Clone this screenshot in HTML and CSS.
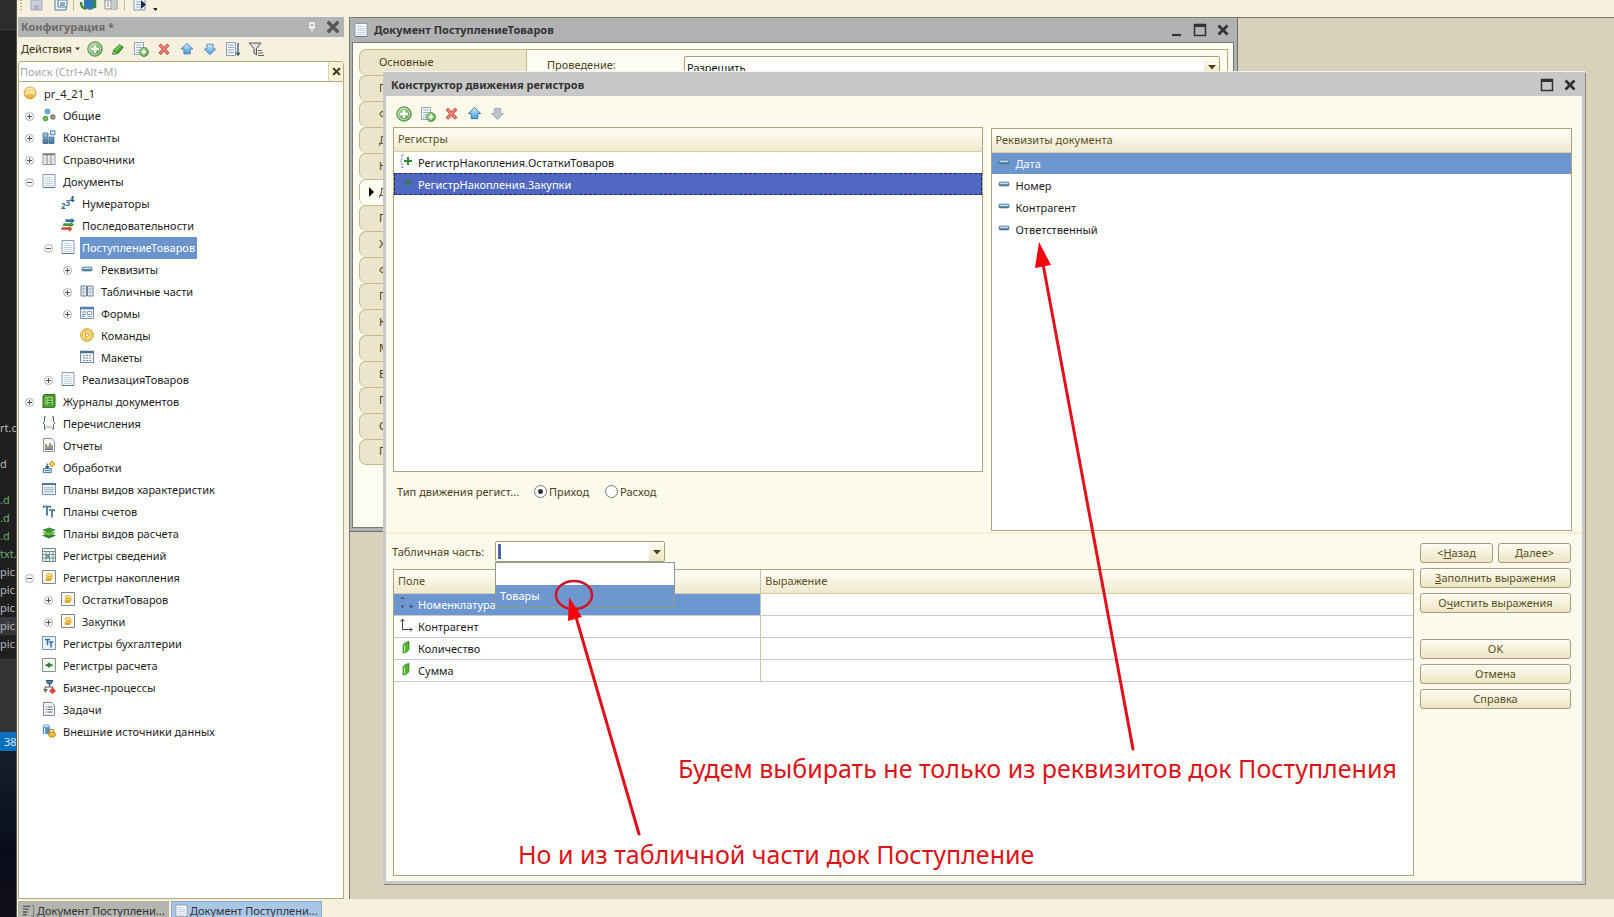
FILE: index.html
```
<!DOCTYPE html>
<html lang="ru">
<head>
<meta charset="utf-8">
<title>Конфигуратор</title>
<link rel="stylesheet" href="styles.css">
</head>
<body>
<svg class="defs" aria-hidden="true">
  <defs>
    <linearGradient id="gGreen" x1="0" y1="0" x2="1" y2="1"><stop offset="0" stop-color="#b5dfa0"/><stop offset="1" stop-color="#4d9440"/></linearGradient>
    <linearGradient id="gBlue" x1="0" y1="0" x2="0" y2="1"><stop offset="0" stop-color="#d6f0ff"/><stop offset="1" stop-color="#3f9fdc"/></linearGradient>
    <linearGradient id="gSteel" x1="0" y1="0" x2="0" y2="1"><stop offset="0" stop-color="#a9cbe0"/><stop offset="1" stop-color="#3d6d92"/></linearGradient>
    <linearGradient id="gGold" x1="0" y1="0" x2="0" y2="1"><stop offset="0" stop-color="#fff3b0"/><stop offset="1" stop-color="#dfa52a"/></linearGradient>
  </defs>
  <symbol id="add" viewBox="0 0 16 16"><circle cx="8" cy="8" r="7.2" fill="url(#gGreen)" stroke="#4f8a48"/><circle cx="8" cy="8" r="5.8" fill="none" stroke="#d2ecc6" stroke-width=".8"/><path d="M8 4v8M4 8h8" stroke="#fff" stroke-width="2.4"/></symbol>
  <symbol id="pencil" viewBox="0 0 16 16"><path d="M2 14l1-5 7-6 4 3-6 7z" fill="#4fae35" stroke="#27701b"/><path d="M2 14l1-4 3 3z" fill="#e9d9a0" stroke="#494"/><path d="M5 9l6-5" stroke="#b5e79a"/></symbol>
  <symbol id="copy" viewBox="0 0 16 16"><path d="M1.5 1.500h9v12h-9z" fill="#f6f9fc" stroke="#8fa3b5"/><path d="M3 4h6M3 6.500h6M3 9h4M3 11.500h3" stroke="#9db5ca"/><circle cx="11" cy="11" r="4.500" fill="url(#gGreen)" stroke="#4f8a48" stroke-width=".8"/><path d="M11 8.500v5M8.500 11h5" stroke="#fff" stroke-width="1.600"/></symbol>
  <symbol id="del" viewBox="0 0 16 16"><path d="M3 3l10 10.500M13 3L3 13.500" stroke="#c9463c" stroke-width="3.600"/><path d="M3.500 3.500l9 9.500M12.500 3.500l-9 9.500" stroke="#f18d80" stroke-width="1.600"/></symbol>
  <symbol id="up" viewBox="0 0 16 16"><path d="M8 1.500L14.500 8H11.500v5.500h-7V8H1.500z" fill="url(#gBlue)" stroke="#3b6fa8"/></symbol>
  <symbol id="down" viewBox="0 0 16 16"><path d="M8 14.500L14.500 8H11.500V2.500h-7V8H1.500z" fill="url(#gBlue)" stroke="#4a80b8"/></symbol>
  <symbol id="downOff" viewBox="0 0 16 16"><path d="M8 14.500L14.500 8H11.500V2.500h-7V8H1.500z" fill="#bcc2ce" stroke="#a2a8b4"/></symbol>
  <symbol id="sort" viewBox="0 0 16 16"><path d="M1.500 1.500h9v13h-9z" fill="#f4f7fb" stroke="#8d9db0"/><path d="M3 4h6M3 6.500h6M3 9h6M3 11.500h6" stroke="#90a8c4"/><path d="M13 2v12M11 11.500l2 2.500 2-2.500" fill="none" stroke="#2c4668" stroke-width="1.200"/></symbol>
  <symbol id="filter" viewBox="0 0 16 16"><path d="M1 2h12L8.500 7.500V14L6 12V7.500z" fill="#ddd" stroke="#555"/><path d="M5 3.500l2.500 3" stroke="#fff"/><path d="M10 9.500h4M10 12h5M10 14.500h6" stroke="#666"/></symbol>
  <symbol id="ball" viewBox="0 0 14 14"><circle cx="7" cy="7" r="6" fill="url(#gGold)" stroke="#b98d2d" stroke-width=".7"/><path d="M2 8c3-2 7-2 10 0" stroke="#fff6c8" stroke-width="2" fill="none" opacity=".7"/></symbol>
  <symbol id="plus" viewBox="0 0 9 9"><circle cx="4.500" cy="4.500" r="4" fill="#fff" stroke="#9a9a9a" stroke-width=".8"/><path d="M4.500 2v5M2 4.500h5" stroke="#555"/></symbol>
  <symbol id="minus" viewBox="0 0 9 9"><circle cx="4.500" cy="4.500" r="4" fill="#fff" stroke="#9a9a9a" stroke-width=".8"/><path d="M2 4.500h5" stroke="#555"/></symbol>
  <symbol id="common" viewBox="0 0 14 14"><circle cx="5.500" cy="3.500" r="3" fill="#6fa8cc"/><circle cx="3.500" cy="10.500" r="2.800" fill="#55a83a"/><circle cx="10.800" cy="9" r="2.700" fill="#8a7a72"/><circle cx="3.500" cy="10.500" r="1" fill="#a6dc8c"/><circle cx="10.800" cy="9" r="1" fill="#bcb0a8"/></symbol>
  <symbol id="const" viewBox="0 0 14 14"><path d="M1 3h5v5H1zM1 9h5v4.500H1zM7 7h5v6.500H7z" fill="url(#gSteel)" stroke="#3a6c94" stroke-width=".8"/><path d="M8.500.800h4.500v4H8.500z" fill="#d8e9f5" stroke="#4b82ae"/></symbol>
  <symbol id="refs" viewBox="0 0 14 14"><path d="M1 1.500h12v11H1z" fill="#fff" stroke="#8a8f90"/><path d="M1 2.500h12" stroke="#8a8f90" stroke-width="2"/><path d="M5 2v10M9 2v10" stroke="#777"/><path d="M3 5v6M7 5v6M11 5v6" stroke="#c5cdd0"/></symbol>
  <symbol id="doc" viewBox="0 0 14 14"><path d="M1 .500h12v13H1z" fill="#f4f8fc" stroke="#8d9cb0"/><path d="M3 3.500h6M3 5.500h8M3 7.500h8M3 9.500h8M3 11.500h8" stroke="#b7c6d8" stroke-width=".8"/><path d="M1 13.500h12" stroke="#5f7690"/></symbol>
  <symbol id="nums" viewBox="0 0 16 16"><text x="0" y="15" class="glyph" fill="#2f6f93">2</text><text x="5" y="11" class="glyph" fill="#2f6f93">3</text><text x="10" y="7" class="glyph" fill="#22506f">4</text></symbol>
  <symbol id="seq" viewBox="0 0 16 16"><path d="M5 1.500h7V0L16 3l-4 3V4.500H5z" fill="#3572a0"/><path d="M3 6h8V4.500L15 7.500 11 10.500V9H2z" fill="#3b9a35"/><path d="M1 10.500h8V9l4 3.500L9 16V13.500H0z" fill="#d0402e"/></symbol>
  <symbol id="attr" viewBox="0 0 14 14"><rect x="2" y="5" width="10" height="4" rx="1" fill="url(#gSteel)" stroke="#41708f" stroke-width=".6"/><path d="M3 6.500h8" stroke="#d7e8f2" stroke-width=".8"/></symbol>
  <symbol id="tabs" viewBox="0 0 14 14"><path d="M1 2h5.500v10H1zM7.500 2H13v10H7.500z" fill="#f3f6f9" stroke="#6c7f90"/><path d="M3.500 2v10M10 2v10M1 5h12M1 8h12" stroke="#8e9eac" stroke-width=".7"/></symbol>
  <symbol id="form" viewBox="0 0 14 14"><path d="M.500 1.500h13v11H.500z" fill="#eef4fa" stroke="#7d92a8"/><path d="M0 2h14" stroke="#4f7fb0" stroke-width="2.500"/><path d="M2 6h4M2 8.500h4M2 10.500h3" stroke="#6b8db5"/><path d="M7.500 5.500h4v3h-4zM7.500 10.500h4" stroke="#8ba0b8" fill="#fff"/></symbol>
  <symbol id="cmd" viewBox="0 0 14 14"><circle cx="7" cy="7" r="6.300" fill="#f9e08c" stroke="#c99b28"/><circle cx="7" cy="7" r="4.600" fill="none" stroke="#e0b540" stroke-width=".8"/><path d="M5.500 4v6l4-3z" fill="#fff4c4" stroke="#c69a2a" stroke-width=".8"/></symbol>
  <symbol id="maket" viewBox="0 0 14 14"><path d="M.500 1.500h13v11H.500z" fill="#f7f8fb" stroke="#6f86a2"/><path d="M0 2h14" stroke="#4d7099" stroke-width="2.500"/><path d="M3 5.500h2M6 5.500h2M9 5.500h2M3 8h2M6 8h2M9 8h2M3 10.500h2M6 10.500h2M9 10.500h2" stroke="#77839b"/></symbol>
  <symbol id="journal" viewBox="0 0 14 14"><path d="M1 1.500L3 .500h10v12L11.500 14H1z" fill="#4f9e2f" stroke="#2f6b1c"/><path d="M3 3h8v8H3z" fill="#8fd36a"/><path d="M4 5h1M6 5h4M4 7.500h1M6 7.500h4M4 10h1M6 10h4" stroke="#2b7020"/></symbol>
  <symbol id="enum" viewBox="0 0 14 14"><path d="M4 .800H2.500V5.500L1 7l1.500 1.500V13H4M10 .800h1.500V5.500L13 7l-1.500 1.500V13H10" fill="none" stroke="#4a5f70"/><path d="M4.500 11h1M6.500 11h1M8.500 11h1" stroke="#333"/></symbol>
  <symbol id="report" viewBox="0 0 14 14"><path d="M1.500.500h8l3 3v10h-11z" fill="#fafafa" stroke="#8b8f98"/><path d="M4 11V6M6 11V8M8 11V5M10 11V7" stroke="#7a6f55" stroke-width="1.400"/><path d="M3 11.500h8" stroke="#666"/></symbol>
  <symbol id="proc" viewBox="0 0 16 16"><path d="M1.500 9.500h9v5h-9z" fill="#dbe9f3" stroke="#2f648e"/><path d="M3 12h6" stroke="#2f648e"/><path d="M6 4v5M4 7l2 2.500L8 7" stroke="#26587f" fill="none" stroke-width="1.300"/><path d="M11 1l4 3.500-3.500 3.500L8 4.500z" fill="#f8cf55" stroke="#c08e22"/></symbol>
  <symbol id="chars" viewBox="0 0 14 14"><path d="M.500 1.500h13v11H.500z" fill="#edf3f8" stroke="#7791a8"/><path d="M0 2h14" stroke="#4d7599" stroke-width="2"/><path d="M3 5v6M5 5v6M7 5v6M9 5v6M11 5v6" stroke="#7a9ab6" stroke-dasharray="1.500 .5"/></symbol>
  <symbol id="accts" viewBox="0 0 14 14"><path d="M1 2.500h8M5 2v9.500M7 6h6M10 5.500v8" stroke="#3a7296" stroke-width="1.700"/><path d="M1.500 2v2M8.500 2v2M12.500 5.500v2" stroke="#3a7296"/></symbol>
  <symbol id="calc" viewBox="0 0 14 14"><path d="M0 9.500L7 7l7 2.500L7 12.500z" fill="#2f7f28"/><path d="M0 6.800L7 4.500l7 2.300-7 3z" fill="#6dbb4d"/><path d="M0 4L7 1.500 14 4 7 7z" fill="#3a9132"/></symbol>
  <symbol id="info" viewBox="0 0 14 14"><path d="M.500.500h13v13H.500z" fill="#eef4f1" stroke="#6a8a84"/><path d="M.500 3.500h13M.500 6.500h13M.500 10h13M4 3v11M7.500 3v11M11 3v11" stroke="#5c8280" stroke-width=".8"/><path d="M4 6.500h4v4H4z" fill="#6f9c93"/></symbol>
  <symbol id="accum" viewBox="0 0 14 14"><path d="M.500.500h13v13H.500z" fill="#faf7ee" stroke="#7c8796"/><ellipse cx="6.500" cy="9.500" rx="3" ry="1.500" fill="#e0a923"/><ellipse cx="7.500" cy="7.400" rx="3" ry="1.500" fill="#f5cf4b" stroke="#b98918" stroke-width=".5"/><ellipse cx="7" cy="5" rx="3" ry="1.500" fill="#ffe27a" stroke="#b98918" stroke-width=".5"/></symbol>
  <symbol id="book" viewBox="0 0 14 14"><path d="M.500.500h13v13H.500z" fill="#eaf2fa" stroke="#7c97b2"/><path d="M3 3.500h5M5.500 3v6M7 6h4.500M9 6v5.500" stroke="#33719c" stroke-width="1.500"/></symbol>
  <symbol id="regcalc" viewBox="0 0 14 14"><path d="M.500.500h13v13H.500z" fill="#f7f9f7" stroke="#86948c"/><path d="M2.500 7L7 5l4.500 2L7 9.500z" fill="#3d8a36"/><path d="M6.500 4.500h1v5h-1z" fill="#2d6c2a"/></symbol>
  <symbol id="bp" viewBox="0 0 14 14"><path d="M4 .500h7L9 4H6z" fill="#58839f" stroke="#31566f"/><path d="M7.500 4v3M3 9V7h8v2" stroke="#555" fill="none"/><path d="M1 9h5l-2.500 4z" fill="#7d6a5e"/><path d="M10.500 7.500L14 11l-3.500 3L7 11z" fill="#e0443a"/></symbol>
  <symbol id="task" viewBox="0 0 14 14"><path d="M1.500.500h8l3 3v10h-11z" fill="#f5f6f9" stroke="#7f8794"/><path d="M3.500 5h1M5.500 5h5M3.500 7.500h1M5.500 7.500h5M3.500 10h1M5.500 10h5" stroke="#5f6a7c"/></symbol>
  <symbol id="ext" viewBox="0 0 16 16"><path d="M1 2.500v9h8v-9z" fill="#4f90c4"/><ellipse cx="5" cy="2.500" rx="4" ry="1.600" fill="#cfe3f2" stroke="#3f749c" stroke-width=".6"/><path d="M3 4v8" stroke="#d9ecf9" stroke-width="1.500"/><path d="M8.500 10V8.500a2.500 2.500 0 0 1 5 0V10" fill="none" stroke="#b68a1f" stroke-width="1.300"/><ellipse cx="11.500" cy="12" rx="4" ry="3" fill="#f2c037" stroke="#a87d18"/></symbol>
  <symbol id="regBoth" viewBox="0 0 14 14"><path d="M5 0H3v5L1.500 7 3 9v5h2" fill="none" stroke="#4f7d8d" stroke-dasharray="2 1"/><path d="M9 3v8M5 7h8" stroke="#2f8a32" stroke-width="2"/></symbol>
  <symbol id="regPlus" viewBox="0 0 14 14"><path d="M9 3v8M5 6.500h8" stroke="#2f7a5a" stroke-width="2"/></symbol>
  <symbol id="dim" viewBox="0 0 14 14"><path d="M3.500 1v10.500H13" fill="none" stroke="#46424e"/><path d="M1.500 3.500l2-2.500 2 2.500M11 9.500l2 2-2 2" fill="none" stroke="#46424e"/></symbol>
  <symbol id="dimSel" viewBox="0 0 14 14"><path d="M2 3l1.500-2L5 3" fill="none" stroke="#28344e"/><path d="M2.500 10.500h2M11 10.500h2.500" stroke="#3b3d5e" stroke-width="2"/></symbol>
  <symbol id="res" viewBox="0 0 14 14"><path d="M4 5c1-2 3-3 6-3.500v7C9.500 11 8 12.500 4 13z" fill="#4eb42c" stroke="#2d7d19" stroke-width=".7"/><path d="M5.500 5.500v6" stroke="#b6eb98" stroke-width="1.300"/></symbol>
  <symbol id="tri" viewBox="0 0 8 5"><path d="M0 0h8L4 4.500z" fill="currentColor"/></symbol>
  <symbol id="close" viewBox="0 0 12 12"><path d="M1.500 1.500l9 9M10.500 1.500l-9 9" stroke="currentColor" stroke-width="2.800"/></symbol>
  <symbol id="max" viewBox="0 0 14 14"><path d="M1.500 1.500h11v11h-11z" fill="none" stroke="#333" stroke-width="1.500"/><path d="M1 2.500h12" stroke="#333" stroke-width="3"/></symbol>
  <symbol id="min" viewBox="0 0 14 14"><path d="M3 12h9" stroke="#333" stroke-width="2.200"/></symbol>
</svg>

<div class="screen">
  <div class="behind">
    <div class="behind-head"></div>
    <ul class="files">
      <li>rt.c</li><li></li><li class="short">d</li><li></li>
      <li class="new">.d</li><li class="new">.d</li><li class="new">.d</li><li class="new">txt.</li>
      <li>pic.</li><li>pic.</li><li>pic.</li><li class="on">pic.</li><li>pic.</li>
    </ul>
    <div class="behind-panel"></div>
    <div class="behind-status">38</div>
    <div class="behind-wall"></div>
  </div>

  <div class="app">
    <div class="mainbar">
      <svg viewBox="0 0 140 12" width="140" height="12" aria-hidden="true">
        <path d="M4 0v11" stroke="#b9a96c" stroke-width="2" stroke-dasharray="1 2"/>
        <path d="M14 0h11v10H14z" fill="#cfcfe0" stroke="#a5a5bd"/><path d="M17 5h5v5h-5z" fill="#aeb0c9"/>
        <path d="M38 0v10h11V7M41 0h9v7h-9z" fill="#edf4fb" stroke="#557ba6"/><path d="M43 3h5M43 5h5" stroke="#2c5e9c"/>
        <path d="M56.500 0v11M107.500 0v11" stroke="#c9bd93"/>
        <path d="M67 0h11v8l-5 2-6-2z" fill="#2f77b4"/><path d="M64 2c0 5 2 6 5 7M78 0v8" stroke="#3d8d35" stroke-width="2.500" fill="none"/>
        <path d="M88 0v9h12V0z" fill="#f5f5f5" stroke="#8a8a8a"/><path d="M94 0v9M90 2h2M90 4h2M90 6h2" stroke="#888"/><path d="M95 0h4v9h-4z" fill="#ccc"/>
        <path d="M117 0v10h11V0" fill="#f5f8fb" stroke="#8296ad"/><path d="M119 2h5M119 4.500h5M119 7h5" stroke="#8fa8c5"/><path d="M124 0v9l5-4.500z" fill="#1c2f49"/>
        <path d="M136 8h5l-2.500 3z" fill="#222"/>
      </svg>
    </div>

    <div class="work">
      <aside class="config">
        <header class="config-title"><h2>Конфигурация *</h2>
          <svg class="pin" viewBox="0 0 8 10" aria-hidden="true"><path d="M2 1h4v4.500H2zM1 5.500h6M4 6v3.500" fill="none" stroke="#fff" stroke-width="1.300"/></svg>
          <button class="bare muted" aria-label="Закрыть"><svg class="i14"><use href="#close"/></svg></button>
        </header>
        <div class="config-tools">
          <button class="bare actions">Действия <svg class="tri"><use href="#tri"/></svg></button>
          <button class="bare" aria-label="Добавить"><svg class="i16"><use href="#add"/></svg></button>
          <button class="bare" aria-label="Изменить"><svg class="i14"><use href="#pencil"/></svg></button>
          <button class="bare" aria-label="Скопировать"><svg class="i16"><use href="#copy"/></svg></button>
          <button class="bare" aria-label="Удалить"><svg class="i14"><use href="#del"/></svg></button>
          <button class="bare" aria-label="Вверх"><svg class="i14"><use href="#up"/></svg></button>
          <button class="bare" aria-label="Вниз"><svg class="i14"><use href="#down"/></svg></button>
          <button class="bare" aria-label="Упорядочить"><svg class="i16"><use href="#sort"/></svg></button>
          <button class="bare" aria-label="Отбор"><svg class="i16"><use href="#filter"/></svg></button>
        </div>
        <div class="search"><input type="text" placeholder="Поиск (Ctrl+Alt+M)" aria-label="Поиск"><button aria-label="Очистить"><svg><use href="#close"/></svg></button></div>
        <ul class="tree">
          <li class="root"><svg class="ic"><use href="#ball"/></svg><span>pr_4_21_1</span></li>
          <li><svg class="ex"><use href="#plus"/></svg><svg class="ic"><use href="#common"/></svg><span>Общие</span></li>
          <li><svg class="ex"><use href="#plus"/></svg><svg class="ic"><use href="#const"/></svg><span>Константы</span></li>
          <li><svg class="ex"><use href="#plus"/></svg><svg class="ic"><use href="#refs"/></svg><span>Справочники</span></li>
          <li><svg class="ex"><use href="#minus"/></svg><svg class="ic"><use href="#doc"/></svg><span>Документы</span></li>
          <li class="l2"><i class="ex"></i><svg class="ic"><use href="#nums"/></svg><span>Нумераторы</span></li>
          <li class="l2"><i class="ex"></i><svg class="ic"><use href="#seq"/></svg><span>Последовательности</span></li>
          <li class="l2 sel"><svg class="ex"><use href="#minus"/></svg><svg class="ic"><use href="#doc"/></svg><span>ПоступлениеТоваров</span></li>
          <li class="l3"><svg class="ex"><use href="#plus"/></svg><svg class="ic"><use href="#attr"/></svg><span>Реквизиты</span></li>
          <li class="l3"><svg class="ex"><use href="#plus"/></svg><svg class="ic"><use href="#tabs"/></svg><span>Табличные части</span></li>
          <li class="l3"><svg class="ex"><use href="#plus"/></svg><svg class="ic"><use href="#form"/></svg><span>Формы</span></li>
          <li class="l3"><i class="ex"></i><svg class="ic"><use href="#cmd"/></svg><span>Команды</span></li>
          <li class="l3"><i class="ex"></i><svg class="ic"><use href="#maket"/></svg><span>Макеты</span></li>
          <li class="l2"><svg class="ex"><use href="#plus"/></svg><svg class="ic"><use href="#doc"/></svg><span>РеализацияТоваров</span></li>
          <li><svg class="ex"><use href="#plus"/></svg><svg class="ic"><use href="#journal"/></svg><span>Журналы документов</span></li>
          <li><i class="ex"></i><svg class="ic"><use href="#enum"/></svg><span>Перечисления</span></li>
          <li><i class="ex"></i><svg class="ic"><use href="#report"/></svg><span>Отчеты</span></li>
          <li><i class="ex"></i><svg class="ic"><use href="#proc"/></svg><span>Обработки</span></li>
          <li><i class="ex"></i><svg class="ic"><use href="#chars"/></svg><span>Планы видов характеристик</span></li>
          <li><i class="ex"></i><svg class="ic"><use href="#accts"/></svg><span>Планы счетов</span></li>
          <li><i class="ex"></i><svg class="ic"><use href="#calc"/></svg><span>Планы видов расчета</span></li>
          <li><i class="ex"></i><svg class="ic"><use href="#info"/></svg><span>Регистры сведений</span></li>
          <li><svg class="ex"><use href="#minus"/></svg><svg class="ic"><use href="#accum"/></svg><span>Регистры накопления</span></li>
          <li class="l2"><svg class="ex"><use href="#plus"/></svg><svg class="ic"><use href="#accum"/></svg><span>ОстаткиТоваров</span></li>
          <li class="l2"><svg class="ex"><use href="#plus"/></svg><svg class="ic"><use href="#accum"/></svg><span>Закупки</span></li>
          <li><i class="ex"></i><svg class="ic"><use href="#book"/></svg><span>Регистры бухгалтерии</span></li>
          <li><i class="ex"></i><svg class="ic"><use href="#regcalc"/></svg><span>Регистры расчета</span></li>
          <li><i class="ex"></i><svg class="ic"><use href="#bp"/></svg><span>Бизнес-процессы</span></li>
          <li><i class="ex"></i><svg class="ic"><use href="#task"/></svg><span>Задачи</span></li>
          <li><i class="ex"></i><svg class="ic"><use href="#ext"/></svg><span>Внешние источники данных</span></li>
        </ul>
      </aside>

      <main class="desktop">
        <section class="docwin">
          <header class="wintitle"><svg class="ic"><use href="#doc"/></svg><h2>Документ ПоступлениеТоваров</h2>
            <button class="bare" aria-label="Свернуть"><svg class="i14"><use href="#min"/></svg></button>
            <button class="bare" aria-label="Развернуть"><svg class="i14"><use href="#max"/></svg></button>
            <button class="bare" aria-label="Закрыть"><svg class="i12"><use href="#close"/></svg></button>
          </header>
          <div class="docbody">
            <nav class="doctabs">
              <button>Основные</button><button>Подсистемы</button><button>Функциональные опции</button><button>Данные</button><button>Нумерация</button><button class="on">Движения</button><button>Последовательности</button><button>Журналы</button><button>Формы</button><button>Поле ввода</button><button>Команды</button><button>Макеты</button><button>Ввод на основании</button><button>Права</button><button>Обмен данными</button><button>Прочее</button>
            </nav>
            <div class="docpane">
              <label for="post">Проведение:</label>
              <div class="combo wide"><select id="post"><option>Разрешить</option></select><svg class="tri"><use href="#tri"/></svg></div>
            </div>
          </div>
        </section>

        <section class="dialog">
          <header class="dlgtitle"><h2>Конструктор движения регистров</h2>
            <button class="bare" aria-label="Развернуть"><svg class="i14"><use href="#max"/></svg></button>
            <button class="bare" aria-label="Закрыть"><svg class="i12"><use href="#close"/></svg></button>
          </header>
          <div class="dlgtop">
            <div class="registers">
              <div class="dlgtools">
                <button class="bare" aria-label="Добавить"><svg class="i16"><use href="#add"/></svg></button>
                <button class="bare" aria-label="Скопировать"><svg class="i16"><use href="#copy"/></svg></button>
                <button class="bare" aria-label="Удалить"><svg class="i14"><use href="#del"/></svg></button>
                <button class="bare" aria-label="Вверх"><svg class="i14"><use href="#up"/></svg></button>
                <button class="bare" aria-label="Вниз"><svg class="i14"><use href="#downOff"/></svg></button>
              </div>
              <div class="box reglist">
                <table>
                  <thead><tr><th>Регистры</th></tr></thead>
                  <tbody>
                    <tr><td><svg class="ic"><use href="#regBoth"/></svg><span>РегистрНакопления.ОстаткиТоваров</span></td></tr>
                    <tr class="focus"><td><svg class="ic"><use href="#regPlus"/></svg><span>РегистрНакопления.Закупки</span></td></tr>
                  </tbody>
                </table>
              </div>
              <div class="kind"><span>Тип движения регист...</span>
                <label><input type="radio" name="kind" checked>Приход</label>
                <label><input type="radio" name="kind">Расход</label>
              </div>
            </div>
            <div class="box attrs">
              <table>
                <thead><tr><th>Реквизиты документа</th></tr></thead>
                <tbody>
                  <tr class="sel"><td><svg class="ic"><use href="#attr"/></svg><span>Дата</span></td></tr>
                  <tr><td><svg class="ic"><use href="#attr"/></svg><span>Номер</span></td></tr>
                  <tr><td><svg class="ic"><use href="#attr"/></svg><span>Контрагент</span></td></tr>
                  <tr><td><svg class="ic"><use href="#attr"/></svg><span>Ответственный</span></td></tr>
                </tbody>
              </table>
            </div>
          </div>

          <div class="dlgbottom">
            <div class="fields">
              <div class="part"><label for="part">Табличная часть:</label>
                <div class="combo"><select id="part"><option></option><option>Товары</option></select><i class="caret"></i><svg class="tri"><use href="#tri"/></svg>
                  <ul class="drop"><li></li><li class="sel">Товары</li></ul>
                </div>
              </div>
              <div class="box fieldlist">
                <table class="grid">
                  <colgroup><col class="c1"><col></colgroup>
                  <thead><tr><th>Поле</th><th>Выражение</th></tr></thead>
                  <tbody>
                    <tr><td class="sel"><svg class="ic"><use href="#dimSel"/></svg><span>Номенклатура</span></td><td></td></tr>
                    <tr><td><svg class="ic"><use href="#dim"/></svg><span>Контрагент</span></td><td></td></tr>
                    <tr><td><svg class="ic"><use href="#res"/></svg><span>Количество</span></td><td></td></tr>
                    <tr><td><svg class="ic"><use href="#res"/></svg><span>Сумма</span></td><td></td></tr>
                  </tbody>
                </table>
              </div>
            </div>
            <div class="buttons">
              <div class="pair"><button>&lt;<u>Н</u>азад</button><button><u>Д</u>алее&gt;</button></div>
              <button><u>З</u>аполнить выражения</button>
              <button>О<u>ч</u>истить выражения</button>
              <button class="apart">OK</button>
              <button>Отмена</button>
              <button>Справка</button>
            </div>
          </div>

          <div class="notes">
            <svg viewBox="0 0 1200 813" width="1200" height="813" aria-hidden="true">
              <g fill="none" stroke="#e0101c" stroke-width="3"><ellipse cx="190" cy="523" rx="18" ry="14" stroke="#cf1526" stroke-width="2.500"/><path d="M255 762L192 545M749 677L659 192" stroke-linecap="round"/></g>
              <path d="M185 525L184 549l14-4zM655 170l-4 26 16-3z" fill="#f5000c"/>
            </svg>
            <p class="note n1">Будем выбирать не только из реквизитов док Поступления</p>
            <p class="note n2">Но и из табличной части док Поступление</p>
          </div>
        </section>
      </main>
    </div>

    <footer class="taskbar">
      <button><svg class="ic" viewBox="0 0 14 14"><path d="M1 2h8M1 5h6M1 8h5M1 11h4" stroke="#555" stroke-width="1.500"/><path d="M10.500 1h2v12h-2" fill="none" stroke="#777"/></svg><span>Документ Поступлени...</span></button>
      <button class="on"><svg class="ic"><use href="#doc"/></svg><span>Документ Поступлени...</span></button>
    </footer>
  </div>
</div>
</body>
</html>
```

FILE: styles.css
```
* { box-sizing: border-box; }
body { margin: 0; font: 11px/22px "Noto Sans", "Open Sans", sans-serif; color: #1c1c1c; }
ul { list-style: none; margin: 0; padding: 0; }
h2 { margin: 0; font-size: 11px; font-weight: 700; }
button, input, select { font: inherit; color: inherit; }
svg { display: block; flex: none; }
.defs { position: absolute; width: 0; height: 0; }
.glyph { font: bold 9px "Noto Sans", sans-serif; }
.screen { display: flex; height: 100vh; overflow: hidden; }
.bare { display: flex; align-items: center; justify-content: center; padding: 0; border: 0; background: none; }
.i16 { width: 16px; height: 16px; }
.i14, .ic { width: 14px; height: 14px; }
.i12 { width: 12px; height: 12px; }
.tri { width: 8px; height: 5px; color: #4f4218; }

/* editor window visible at the left edge */
.behind { display: flex; flex-direction: column; flex: none; width: 17px; overflow: hidden; background: #1f1f1f; color: #b8b8b8; border-right: 1px solid #55554c; white-space: nowrap; }
.behind-head { height: 30px; flex: none; background: #2c2c2c; border-bottom: 1px solid #3d3d3d; }
.files { padding-top: 389px; height: 629px; flex: none; line-height: 18px; }
.files li { height: 18px; }
.files .new { color: #68b06c; }
.files .on { background: #37373d; }
.behind-panel { height: 73px; flex: none; background: #333; }
.behind-status { height: 19px; flex: none; line-height: 19px; padding-left: 4px; background: #0a6fbd; color: #d5e8f7; }
.behind-wall { flex: 1; background: linear-gradient(#14202c, #0a0c1c 60%, #101018); }

.app { display: flex; flex-direction: column; flex: 1; min-width: 0; background: #f6f1de; }
.mainbar { display: flex; align-items: flex-start; height: 17px; flex: none; }
.work { display: flex; flex: 1; min-height: 0; }
.taskbar { display: flex; gap: 2px; height: 18px; flex: none; padding: 2px 0 0 1px; overflow: hidden; }
.taskbar button { display: flex; align-items: center; gap: 2px; width: 151px; height: 20px; padding: 0 3px; border: 1px solid #b5b29c; background: #b4b4b0; white-space: nowrap; color: #333; }
.taskbar .on { background: #a9c6e6; border-color: #8fa9c4; }
.taskbar .ic { width: 13px; }

/* configuration tree */
.config { display: flex; flex-direction: column; flex: none; width: 327px; padding-left: 1px; }
.config-title { display: flex; align-items: center; height: 20px; padding: 0 4px 0 3px; background: #b4b4b4; color: #6b6b6b; }
.config-title h2 { flex: 1; }
.pin { width: 8px; height: 10px; margin-right: 10px; }
.muted { color: #555; }
.config-tools { display: flex; align-items: center; gap: 7px; height: 24px; padding-left: 3px; }
.config-tools .actions { gap: 3px; white-space: nowrap; color: #3a3214; }
.config-tools .i14 { margin: 0 1px; }
.actions .tri { width: 5px; height: 4px; }
.search { display: flex; height: 21px; border: 1px solid #b3ab80; border-radius: 3px 3px 0 0; background: #fff; }
.search input { flex: 1; min-width: 0; border: 0; padding: 0 1px; background: none; outline: 0; }
.search input::placeholder { color: #a8a8a8; opacity: 1; }
.search button { display: flex; align-items: center; justify-content: center; width: 15px; padding: 0; border: 0; border-left: 1px solid #d8d2ae; background: #f8f3d8; }
.search button svg { width: 9px; height: 9px; color: #3d3410; }
.tree { flex: 1; min-height: 0; padding-top: 1px; border: 1px solid #b3ab80; border-top: 0; background: #fff; }
.tree li { display: flex; align-items: center; height: 22px; padding-left: 6px; white-space: nowrap; }
.tree .l2 { padding-left: 25px; }
.tree .l3 { padding-left: 44px; }
.tree .root { padding-left: 4px; }
.tree .ex { width: 9px; height: 9px; margin-right: 8px; }
.tree .ic { margin-bottom: 3px; }
.tree span { margin-left: 5px; padding: 0 2px; }
.tree .sel span { background: #6b93cc; color: #fff; }

/* workspace with child windows */
.desktop { position: relative; flex: 1; min-width: 0; margin-left: 5px; border-left: 1px solid #77776c; border-top: 1px solid #77776c; background: #d8d1bc; }
.docwin { position: absolute; left: 0; top: 0; right: 376px; height: 514px; display: flex; flex-direction: column; border: 1px solid #6d6d6d; border-top: 0; border-left: 0; background: #b2b2b2; padding: 0 3px 3px 2px; }
.wintitle { display: flex; align-items: center; gap: 10px; height: 24px; flex: none; padding: 0 5px 0 2px; color: #333; }
.wintitle h2, .dlgtitle h2 { flex: 1; }
.wintitle .ic { margin-right: -4px; }
.docbody { display: flex; flex: 1; min-height: 0; padding: 6px 5px 6px 6px; border: 1px solid #777; background: #fdfcf0; }
.doctabs { width: 168px; flex: none; display: flex; flex-direction: column; }
.doctabs button { height: 26px; flex: none; padding: 0 0 2px 19px; text-align: left; border: 1px solid #c3b88c; border-width: 1px 1px 0; border-radius: 7px 0 0 7px; background: #ece5cb; color: #4a421c; }
.doctabs button:last-child { border-bottom-width: 1px; }
.doctabs .on { background: #fffef4; position: relative; }
.doctabs .on::before { content: ""; position: absolute; left: 9px; top: 7px; border-left: 5px solid #111; border-top: 5px solid transparent; border-bottom: 5px solid transparent; }
.docpane { display: flex; align-items: flex-start; flex: 1; padding: 6px 7px 0 20px; border: 1px solid #b3a878; border-left: 0; color: #4a421c; }
.docpane label { width: 137px; line-height: 18px; }

.combo { position: relative; width: 170px; height: 21px; border: 1px solid #a89d70; border-radius: 2px; background: #fff; }
.combo.wide { flex: 1; width: auto; color: #111; }
.combo select { display: block; width: 100%; height: 19px; padding: 0 20px 0 2px; border: 0; appearance: none; background: linear-gradient(#fffdf2, #ece4c0) right / 15px 100% no-repeat; outline: 0; }
.combo > .tri { position: absolute; right: 3px; top: 8px; pointer-events: none; }
.caret { position: absolute; left: 2px; top: 2px; width: 3px; height: 15px; background: #4f64a8; }
.drop { position: absolute; z-index: 1; left: -1px; top: 20px; width: 180px; border: 1px solid #8f9a8a; background: #fff; }
.drop li { height: 22px; padding: 0 4px; }
.drop .sel { background: #6f97cf; color: #fff; }

.dialog { position: absolute; left: 33px; right: 29px; top: 54px; bottom: 15px; display: flex; flex-direction: column; border: 3px solid #c8c8c8; border-top: 0; background: #fcfaeb; box-shadow: 1px 1px 0 #85857c, 0 -1px 0 #f4f3ee; }
.dlgtitle { display: flex; align-items: center; gap: 10px; height: 24px; flex: none; padding: 2px 6px 0 5px; background: #c8c8c8; color: #333; }
.dlgtop { display: flex; gap: 8px; flex: none; padding: 0 10px 1px 7px; border-bottom: 2px solid #f4f0d8; }
.registers { flex: 59; min-width: 0; }
.attrs { flex: 58; min-width: 0; margin-top: 32px; }
.dlgtools { display: flex; align-items: center; gap: 8px; height: 31px; padding: 4px 0 0 3px; }
.dlgtools .i14 { width: 15px; height: 15px; }
.box { border: 1px solid #a9a584; background: #fff; }
.reglist { height: 345px; }
.kind { display: flex; align-items: center; height: 59px; padding: 0 0 20px 4px; color: #4a421c; }
.kind > span { width: 137px; }
.kind label { display: flex; align-items: center; gap: 2px; margin-right: 16px; }
.kind input { appearance: none; width: 13px; height: 13px; margin: 0; border: 1px solid #777; border-radius: 50%; background: #fff; }
.kind input:checked { background: radial-gradient(circle, #333 2px, #fff 3px); }

table { width: 100%; border-collapse: collapse; table-layout: fixed; }
th { height: 23px; padding: 0 4px; line-height: 20px; text-align: left; font-weight: 400; color: #5a5022; background: linear-gradient(#fdfbf1 20%, #efe8cb); border-bottom: 1px solid #d5cfae; }
td { height: 22px; padding: 0 5px; line-height: 20px; white-space: nowrap; }
td .ic { display: inline-block; vertical-align: middle; margin-bottom: 4px; }
td span { margin-left: 5px; vertical-align: middle; }
.sel > td, td.sel { background: #6b96d0; color: #fff; }
.focus td { background: #5068c2; color: #fff; outline: 1px dashed #1f2550; outline-offset: -1px; }
.grid .c1 { width: 36%; }
.grid td { border-bottom: 1px solid #c9c9c9; }
.grid td + td, .grid th + th { border-left: 1px solid #c9c5ac; }

.dlgbottom { display: flex; flex: 1; min-height: 0; gap: 6px; padding: 7px 11px 5px 6px; }
.fields { display: flex; flex-direction: column; flex: 1; min-width: 0; }
.part { display: flex; align-items: center; margin-bottom: 7px; color: #4a421c; }
.part label { width: 103px; line-height: 21px; }
.fieldlist { flex: 1; margin-left: 1px; }
.buttons { display: flex; flex-direction: column; gap: 5px; width: 151px; flex: none; padding-top: 2px; }
.buttons button { height: 20px; padding: 0; line-height: 18px; border: 1px solid #a79d7c; border-radius: 3px; background: linear-gradient(#fdfcf3, #ece5c5); color: #5a4f20; }
.pair { display: flex; gap: 5px; }
.pair button { flex: 1; }
.apart { margin-top: 21px; }

/* hand-drawn remarks over the dialog */
.notes { position: absolute; left: -2px; top: 0; width: 0; height: 0; z-index: 2; pointer-events: none; }
.note { position: absolute; margin: 0; white-space: nowrap; color: #dc1418; font-size: 25px; line-height: 34px; }
.n1 { left: 294px; top: 679px; }
.n2 { left: 134px; top: 765px; }
```
